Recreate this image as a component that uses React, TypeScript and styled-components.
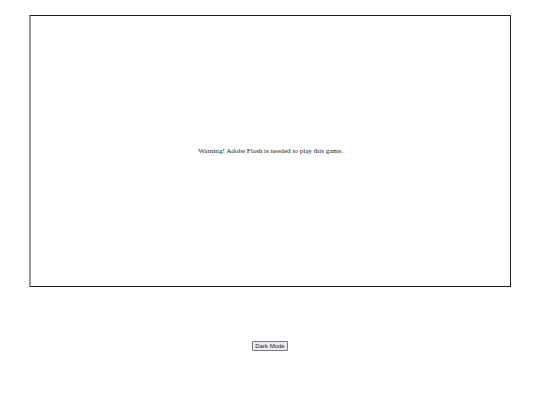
import styled, { createGlobalStyle } from 'styled-components';

const GlobalStyle = createGlobalStyle`
  html, body {
    margin: 0;
    padding: 0;
    background: #fff;
  }
`;

const Page = styled.div`
  display: flex;
  flex-direction: column;
  align-items: center;
  padding: 15px 29px 0;
`;

const GameFrame = styled.div`
  box-sizing: border-box;
  width: 100%;
  height: 272px;
  display: flex;
  align-items: center;
  justify-content: center;
  border: 1px solid #1e1e1e;
  border-left: 2px solid #9a9a9a;
  background: #fff;
`;

const Warning = styled.p`
  margin: 0;
  font-family: 'Liberation Serif', 'Times New Roman', serif;
  font-size: 7.1px;
  color: #222;
`;

const Controls = styled.div`
  display: flex;
  justify-content: center;
  margin-top: 54px;
`;

const ModeButton = styled.button`
  box-sizing: border-box;
  height: 10px;
  padding: 0 2.5px;
  border: 1px solid #7a7a7a;
  border-radius: 1px;
  background: #ececec;
  color: #222;
  font-family: 'Liberation Sans', Arial, sans-serif;
  font-size: 6px;
  line-height: 8px;
  cursor: pointer;
`;

const App = () => {
  return (
    <>
      <GlobalStyle />
      <Page>
        <GameFrame>
          <Warning>Warning! Adobe Flash is needed to play this game.</Warning>
        </GameFrame>
        <Controls>
          <ModeButton type="button">Dark Mode</ModeButton>
        </Controls>
      </Page>
    </>
  );
};

export default App;
